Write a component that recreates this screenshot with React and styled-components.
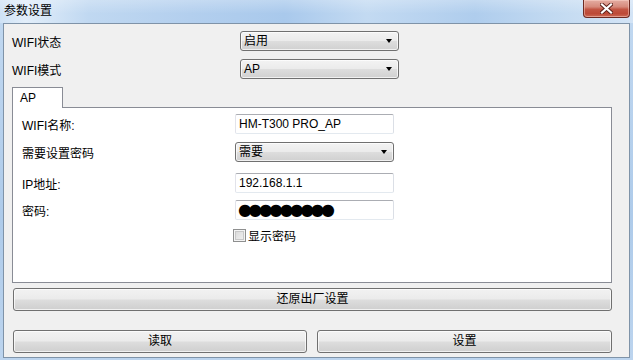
import React from "react";
import styled, { createGlobalStyle } from "styled-components";

const GlobalStyle = createGlobalStyle`
  html, body {
    margin: 0;
    padding: 0;
  }
  body {
    font-family: "Liberation Sans", "Noto Sans CJK SC", sans-serif;
    font-size: 12px;
    color: #000;
  }
`;

const Window = styled.div`
  width: 633px;
  height: 360px;
  box-sizing: border-box;
  display: flex;
  flex-direction: column;
  padding: 0 3px 2px 3px;
  background: linear-gradient(180deg, #c2d9f1 0%, #aecbea 60%, #bcd4ee 100%);
`;

const TitleBar = styled.div`
  height: 23px;
  margin: 0 -3px;
  padding: 0 4px 0 4px;
  display: flex;
  align-items: flex-start;
  background:
    linear-gradient(180deg, rgba(255, 255, 255, 0.25), rgba(255, 255, 255, 0) 60%),
    linear-gradient(90deg, #cfe2f5 0%, #e2eefa 4%, #c0d8f1 14%, #b3cfee 30%, #a9c9ec 45%, #c3daf2 58%, #afcded 75%, #c6dcf2 90%, #d3e4f6 100%);
`;

const Title = styled.div`
  line-height: 23px;
  height: 23px;
  font-size: 12px;
  color: #000;
`;

const CloseButton = styled.div`
  margin-left: auto;
  margin-right: -1px;
  width: 47px;
  height: 18px;
  box-sizing: border-box;
  border: 1px solid #6d2a22;
  border-top: none;
  border-radius: 0 0 4px 4px;
  background: linear-gradient(180deg, #e4ada2 0%, #d68a7c 40%, #c25543 55%, #bd4a37 80%, #cc6a56 100%);
  box-shadow: inset 0 0 0 1px rgba(255, 220, 210, 0.45);
  display: flex;
  align-items: center;
  justify-content: center;
`;

const Client = styled.div`
  flex: 1;
  border: 1px solid #7f93a8;
  background: #f0f0f0;
  display: flex;
  flex-direction: column;
`;

const TopRow = styled.div`
  display: flex;
  align-items: center;
  margin-top: ${(p) => p.$mt}px;
  padding-left: 8px;
`;

const TopLabel = styled.div`
  width: 228px;
`;

const Combo = styled.div`
  width: ${(p) => p.$w}px;
  height: 20px;
  box-sizing: border-box;
  border: 1px solid #707070;
  border-radius: 3px;
  background: linear-gradient(180deg, #f3f3f3 0%, #ebebeb 48%, #dddddd 52%, #d0d0d0 100%);
  box-shadow: inset 0 0 0 1px rgba(255, 255, 255, 0.7);
  display: flex;
  align-items: center;
  padding: 0 6px 0 3px;
`;

const ComboText = styled.span`
  flex: 1;
  line-height: 18px;
`;

const Arrow = styled.span`
  width: 0;
  height: 0;
  border-left: 3.5px solid transparent;
  border-right: 3.5px solid transparent;
  border-top: 4px solid #000;
`;

const TabStrip = styled.div`
  display: flex;
  margin: 8px 0 0 8px;
`;

const Tab = styled.div`
  position: relative;
  z-index: 1;
  width: 51px;
  height: 21px;
  box-sizing: border-box;
  border: 1px solid #898c95;
  border-bottom: none;
  background: #fff;
  margin-bottom: -1px;
  padding: 2px 0 0 7px;
  line-height: 16px;
`;

const Panel = styled.div`
  margin-left: 8px;
  width: 600px;
  height: 176px;
  box-sizing: border-box;
  border: 1px solid #898c95;
  background: #fff;
  padding: 0 0 0 9px;
`;

const FieldRow = styled.div`
  display: flex;
  align-items: center;
  margin-top: ${(p) => p.$mt}px;
`;

const FieldLabel = styled.div`
  width: 213px;
`;

const TextBox = styled.div`
  width: 159px;
  height: 20px;
  box-sizing: border-box;
  border: 1px solid;
  border-color: #abadb3 #dbdfe6 #e3e9ef #e2e3ea;
  border-radius: 2px;
  background: #fff;
  padding: 0 3px;
  line-height: 18px;
  overflow: hidden;
  white-space: nowrap;
`;

const Dots = styled.span`
  font-family: "DejaVu Sans", sans-serif;
  font-size: 16px;
  letter-spacing: -3.6px;
  line-height: 18px;
  margin-left: -1px;
`;

const CheckRow = styled.div`
  display: flex;
  align-items: center;
  margin: 7px 0 0 211px;
  gap: 2px;
`;

const CheckBox = styled.span`
  width: 13px;
  height: 13px;
  box-sizing: border-box;
  border: 1px solid #8e8f8f;
  background: linear-gradient(135deg, #d6d6d6 0%, #f4f4f4 100%);
  box-shadow: inset 0 0 0 1px #f4f4f4, inset 0 0 0 2px #c8c8c8;
`;

const Button = styled.div`
  width: ${(p) => p.$w}px;
  height: 23px;
  box-sizing: border-box;
  border: 1px solid #707070;
  border-radius: 3px;
  background: linear-gradient(180deg, #f2f2f2 0%, #ebebeb 48%, #dddddd 52%, #cfcfcf 100%);
  box-shadow: inset 0 0 0 1px rgba(255, 255, 255, 0.7);
  display: flex;
  align-items: center;
  justify-content: center;
  line-height: 21px;
`;

const RestoreRow = styled.div`
  margin: 5px 0 0 9px;
`;

const BottomRow = styled.div`
  display: flex;
  gap: 10px;
  margin: 19px 0 0 9px;
`;

const CloseIcon = () => (
  <svg width="13" height="11" viewBox="0 0 13 11">
    <path d="M2 1.5 L11 9.5 M11 1.5 L2 9.5" stroke="#5a1f18" strokeWidth="4" strokeLinecap="square" />
    <path d="M2 1.5 L11 9.5 M11 1.5 L2 9.5" stroke="#fff" strokeWidth="2.2" strokeLinecap="square" />
  </svg>
);

const Select = ({ value, width }) => (
  <Combo $w={width}>
    <ComboText>{value}</ComboText>
    <Arrow />
  </Combo>
);

export default function App() {
  return (
    <>
      <GlobalStyle />
      <Window>
        <TitleBar>
          <Title>参数设置</Title>
          <CloseButton>
            <CloseIcon />
          </CloseButton>
        </TitleBar>
        <Client>
          <TopRow $mt={7}>
            <TopLabel>WIFI状态</TopLabel>
            <Select value="启用" width={159} />
          </TopRow>
          <TopRow $mt={8}>
            <TopLabel>WIFI模式</TopLabel>
            <Select value="AP" width={159} />
          </TopRow>
          <TabStrip>
            <Tab>AP</Tab>
          </TabStrip>
          <Panel>
            <FieldRow $mt={6}>
              <FieldLabel>WIFI名称:</FieldLabel>
              <TextBox>HM-T300 PRO_AP</TextBox>
            </FieldRow>
            <FieldRow $mt={8}>
              <FieldLabel>需要设置密码</FieldLabel>
              <Select value="需要" width={159} />
            </FieldRow>
            <FieldRow $mt={11}>
              <FieldLabel>IP地址:</FieldLabel>
              <TextBox>192.168.1.1</TextBox>
            </FieldRow>
            <FieldRow $mt={7}>
              <FieldLabel>密码:</FieldLabel>
              <TextBox>
                <Dots>●●●●●●●●●</Dots>
              </TextBox>
            </FieldRow>
            <CheckRow>
              <CheckBox />
              <span>显示密码</span>
            </CheckRow>
          </Panel>
          <RestoreRow>
            <Button $w={599}>还原出厂设置</Button>
          </RestoreRow>
          <BottomRow>
            <Button $w={294}>读取</Button>
            <Button $w={295}>设置</Button>
          </BottomRow>
        </Client>
      </Window>
    </>
  );
}
